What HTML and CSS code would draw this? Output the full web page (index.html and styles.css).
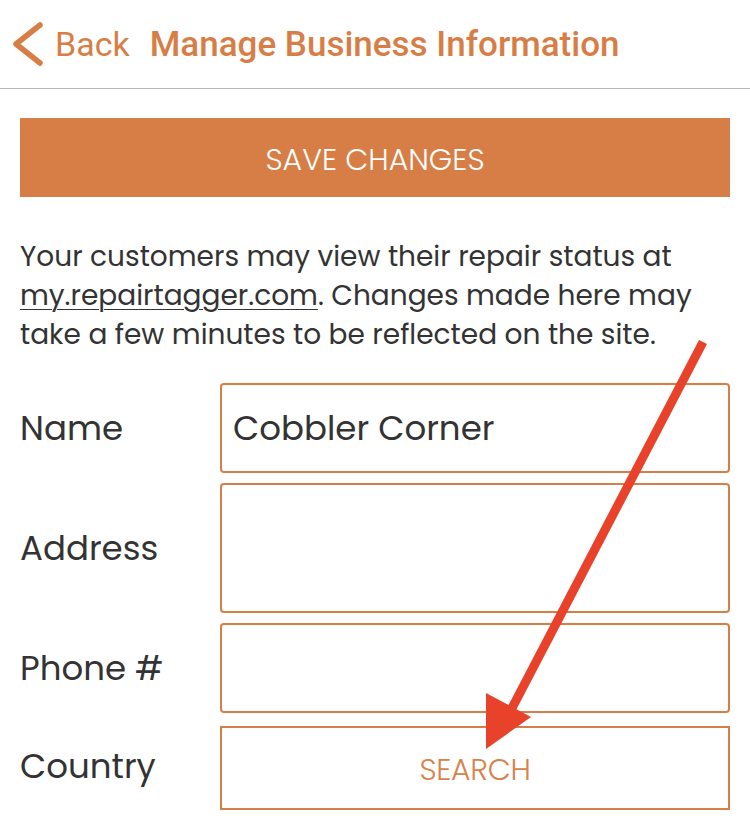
FILE: index.html
```html
<!DOCTYPE html>
<html>
<head>
<meta charset="utf-8">
<link rel="stylesheet" href="styles.css">
</head>
<body>
<header class="topbar">
  <a class="back">
    <svg class="chev" width="36" height="48" viewBox="0 0 36 48"><path d="M30 5 L6 24 L30 43" fill="none" stroke="#d77e46" stroke-width="5.5" stroke-linecap="round" stroke-linejoin="round"/></svg>
    <span class="back-label">Back</span>
  </a>
  <h1 class="title">Manage Business Information</h1>
</header>
<main class="content">
  <button class="save">SAVE CHANGES</button>
  <p class="note">Your customers may view their repair status at <u>my.repairtagger.com</u>. Changes made here may take a few minutes to be reflected on the site.</p>
  <div class="form">
    <label class="lbl">Name</label>
    <div class="field f-name">Cobbler Corner</div>
    <label class="lbl">Address</label>
    <div class="field f-address"></div>
    <label class="lbl">Phone #</label>
    <div class="field f-phone"></div>
    <label class="lbl">Country</label>
    <div class="search">SEARCH</div>
  </div>
</main>
<svg class="arrow" width="750" height="823" viewBox="0 0 750 823">
  <line x1="703" y1="342" x2="510" y2="712" stroke="#e8432a" stroke-width="9" stroke-linecap="butt"/>
  <polygon points="486,693 531,717 486,749" fill="#e8432a"/>
</svg>
</body>
</html>
```
FILE: styles.css
```css
html, body { margin: 0; padding: 0; background: #fff; }
body { width: 750px; height: 823px; position: relative; overflow: hidden; font-family: "Poppins", "Open Sans", sans-serif; color: #333; }
.topbar { height: 88px; border-bottom: 1px solid #b8b8b8; display: flex; align-items: center; padding-left: 10px; box-sizing: content-box; }
.back { display: flex; align-items: center; color: #d77e46; }
.chev { display: block; margin-right: 9px; }
.back-label { font-family: Roboto, sans-serif; font-size: 34px; font-weight: 400; }
.title { margin: 0 0 0 20px; font-family: Roboto, sans-serif; font-size: 35px; font-weight: 500; color: #d77e46; }
.content { padding: 29px 20px 0; }
.save { display: block; width: 710px; height: 79px; border: 0; background: #d77e46; color: #fff; font-family: "Poppins", "Open Sans", sans-serif; font-size: 30px; font-weight: 300; letter-spacing: 0; padding: 4px 0 0; }
.note { margin: 40px 0 0; font-size: 28px; line-height: 39px; }
.note u { text-decoration-thickness: 1px; text-underline-offset: 4px; }
.form { display: grid; grid-template-columns: 200px 510px; row-gap: 10px; margin-top: 29px; align-items: center; }
.lbl { font-size: 34px; }
.field { border: 2px solid #d77e46; border-radius: 4px; box-sizing: border-box; display: flex; align-items: center; padding-left: 11px; font-size: 34px; }
.f-name { height: 90px; }
.f-address { height: 130px; }
.f-phone { height: 90px; }
.search { height: 84px; margin-top: 3px; border: 2px solid #d77e46; box-sizing: border-box; display: flex; align-items: center; justify-content: center; padding-top: 4px; color: #d9824c; font-family: "Poppins", "Open Sans", sans-serif; font-weight: 300; font-size: 30px; letter-spacing: -0.3px; }
.arrow { position: absolute; left: 0; top: 0; pointer-events: none; }
```
